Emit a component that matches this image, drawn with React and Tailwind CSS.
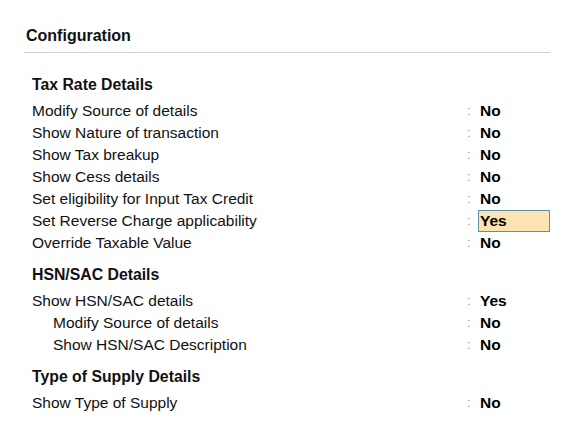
import React from "react";

const sections = [
  {
    title: "Tax Rate Details",
    rows: [
      { label: "Modify Source of details", value: "No" },
      { label: "Show Nature of transaction", value: "No" },
      { label: "Show Tax breakup", value: "No" },
      { label: "Show Cess details", value: "No" },
      { label: "Set eligibility for Input Tax Credit", value: "No" },
      { label: "Set Reverse Charge applicability", value: "Yes", active: true },
      { label: "Override Taxable Value", value: "No" },
    ],
  },
  {
    title: "HSN/SAC Details",
    rows: [
      { label: "Show HSN/SAC details", value: "Yes" },
      { label: "Modify Source of details", value: "No", indent: true },
      { label: "Show HSN/SAC Description", value: "No", indent: true },
    ],
  },
  {
    title: "Type of Supply Details",
    rows: [{ label: "Show Type of Supply", value: "No" }],
  },
];

const Row = ({ label, value, active, indent }) => (
  <div className="flex h-[22px] items-stretch leading-[22px] text-[15.5px]">
    <div className={`w-[435px] text-[#111] ${indent ? "pl-[21px]" : ""}`}>
      {label}
    </div>
    <div className="w-[11px] text-[#9a9a9a] text-[13px]">:</div>
    {active ? (
      <div className="w-[72px] bg-[#fde3b2] border border-[#5d8fa6] pl-[1px] leading-[20px] font-bold text-black">
        {value}
      </div>
    ) : (
      <div className="w-[72px] pl-[2px] font-bold text-black">{value}</div>
    )}
  </div>
);

const App = () => {
  return (
    <div
      className="min-h-[436px] w-[561px] bg-white"
      style={{ fontFamily: '"Liberation Sans", Arial, sans-serif' }}
    >
      <div className="ml-[24px] w-[526px] pt-[25px]">
        {/* Title */}
        <div className="border-b border-[#cfcfcf] pb-[5px] pl-[2px]">
          <h1 className="h-[22px] leading-[22px] text-[16px] font-bold text-[#111]">
            Configuration
          </h1>
        </div>

        <div className="pl-[8px] pt-[21px]">
          {sections.map((section, i) => (
            <div key={section.title} className={i > 0 ? "mt-[10px]" : ""}>
              <h2 className="mb-[4px] h-[22px] leading-[22px] text-[15.8px] font-bold text-[#111]">
                {section.title}
              </h2>
              {section.rows.map((row, j) => (
                <Row key={j} {...row} />
              ))}
            </div>
          ))}
        </div>
      </div>
    </div>
  );
};

export default App;
